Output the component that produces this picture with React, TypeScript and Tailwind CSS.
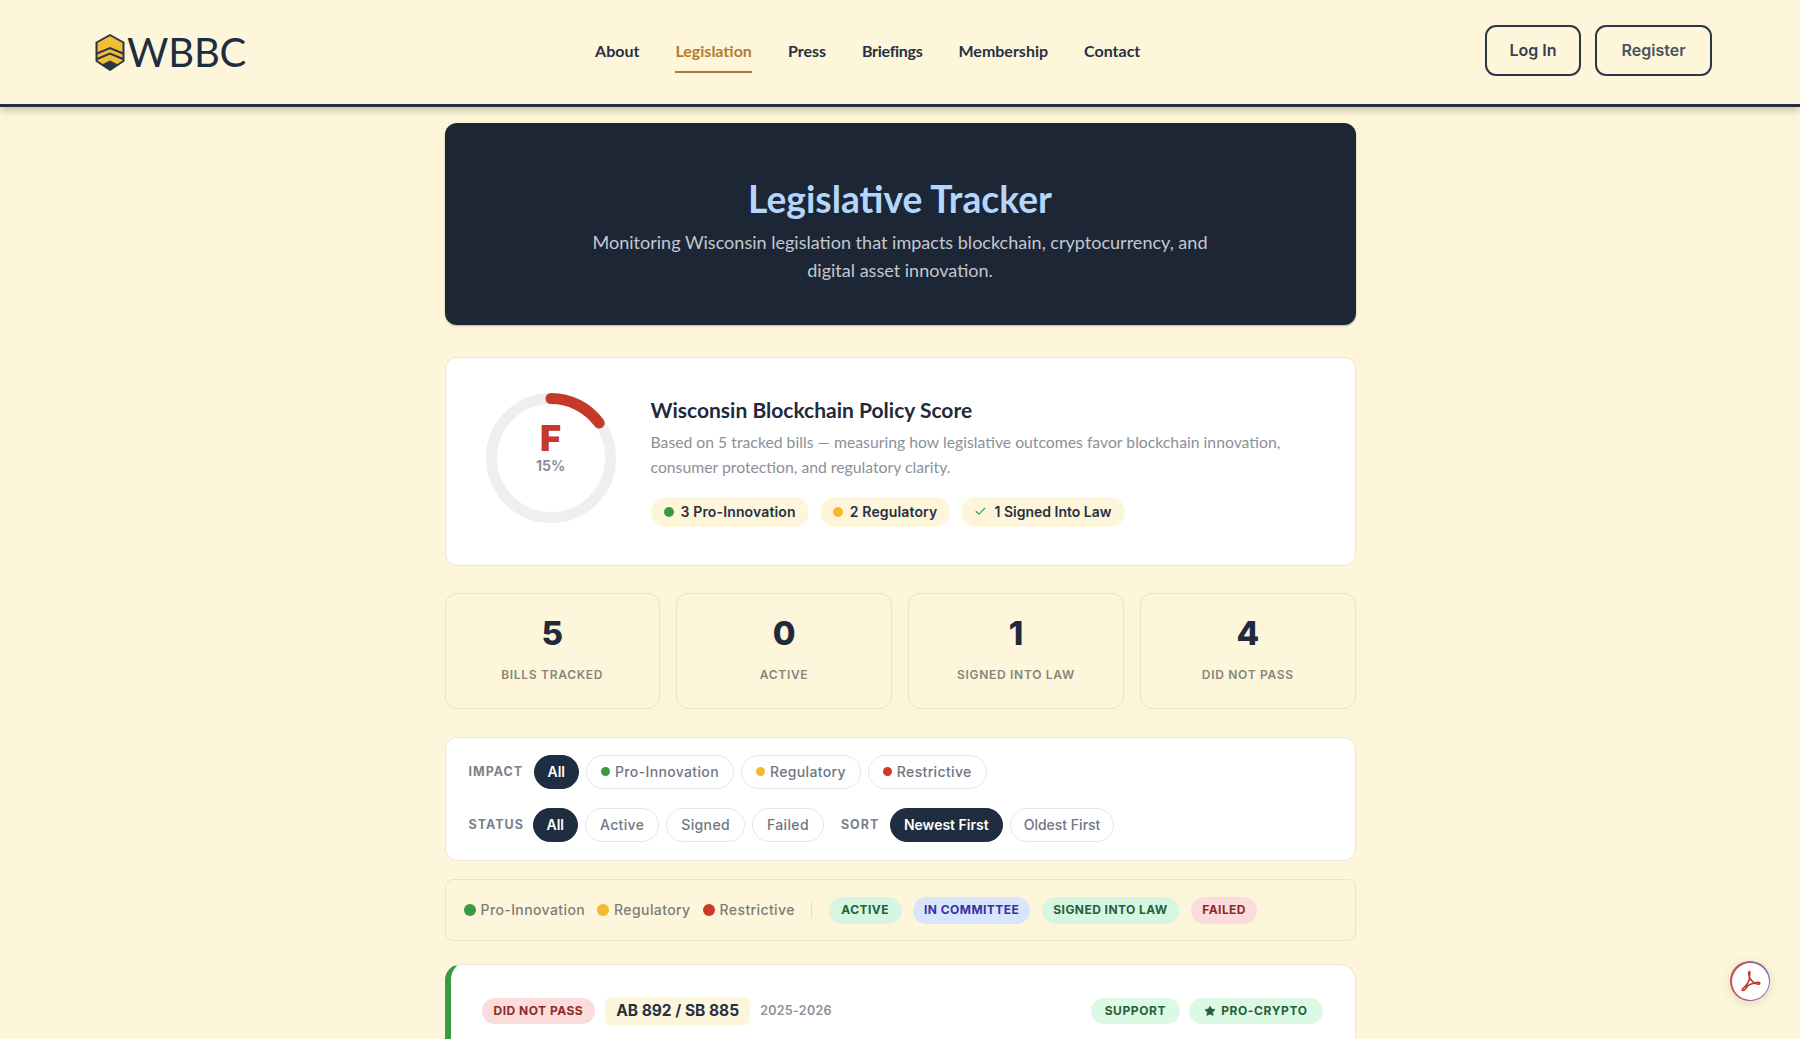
import { Check, Star } from 'lucide-react'

const NAV = ['About', 'Legislation', 'Press', 'Briefings', 'Membership', 'Contact']

const STATS = [
  { value: '5', label: 'Bills Tracked' },
  { value: '0', label: 'Active' },
  { value: '1', label: 'Signed Into Law' },
  { value: '4', label: 'Did Not Pass' },
]

const DOT = {
  green: 'bg-[#3a9a42]',
  yellow: 'bg-[#f4b92d]',
  red: 'bg-[#c93a2b]',
}

function Logo() {
  return (
    <div className="flex items-center gap-[1px]">
      <svg width="32" height="37" viewBox="0 0 32 37" className="shrink-0">
        <path d="M16 1 L29.5 8.5 V27 L16 36 L2.5 27 V8.5 Z" fill="#f2bd37" stroke="#2a3545" strokeWidth="2" strokeLinejoin="round" />
        <path d="M3 19.5 L16 14 L29 19.5" fill="none" stroke="#2a3545" strokeWidth="2" />
        <path d="M3 25 L16 19.5 L29 25" fill="none" stroke="#2a3545" strokeWidth="2" />
        <path d="M8 30.5 L16 26.5 L24 30.5 L16 36 Z" fill="#2a3545" />
      </svg>
      <span className="font-['Lato'] text-[40px] leading-none tracking-[-0.2px] text-[#1f2d40]">WBBC</span>
    </div>
  )
}

function Pill({ tight, children }: { tight?: boolean; children: React.ReactNode }) {
  return (
    <span
      className={`flex h-[30px] items-center rounded-full bg-[#fef6da] px-[13px] font-['Inter'] text-[14px] font-semibold text-[#253044] ${
        tight ? 'gap-[7px]' : 'gap-[7px] tracking-[0.15px]'
      }`}
    >
      {children}
    </span>
  )
}

function FilterButton({
  active,
  plain,
  dot,
  children,
}: {
  active?: boolean
  plain?: boolean
  dot?: string
  children: React.ReactNode
}) {
  return (
    <span
      className={`flex h-[34px] items-center gap-[5px] rounded-full border font-['Inter'] text-[14px] font-medium ${
        plain ? 'px-[13px] tracking-normal' : 'px-[14px] tracking-[0.35px]'
      } ${active ? 'border-[#1f2d40] bg-[#1f2d40] font-semibold text-white' : 'border-[#e5e7eb] bg-white text-[#6f7682]'}`}
    >
      {dot && <i className={`h-[9px] w-[9px] rounded-full ${dot}`} />}
      {children}
    </span>
  )
}

function FilterLabel({ children }: { children: React.ReactNode }) {
  return (
    <span className="mt-[1px] block font-['Inter'] text-[12.5px] leading-none font-bold tracking-[1px] text-[#7b818c] uppercase">
      {children}
    </span>
  )
}

function LegendItem({ dot, children }: { dot: string; children: React.ReactNode }) {
  return (
    <span className="flex items-center gap-[5px] font-['Inter'] text-[14px] font-medium tracking-[0.4px] text-[#7c7c78]">
      <i className={`h-3 w-3 rounded-full ${dot}`} />
      <span className="mb-[2px]">{children}</span>
    </span>
  )
}

function Badge({ className, children }: { className: string; children: React.ReactNode }) {
  return (
    <span className={`flex items-center rounded-full font-['Inter'] text-[12px] font-bold uppercase ${className}`}>
      {children}
    </span>
  )
}

export default function App() {
  return (
    <div className="h-[1039px] overflow-hidden bg-[#fef6da]">
      <header className="flex h-[107px] items-center border-b-[3px] border-[#252f3d] pr-[88px] pl-[94px] shadow-[0_3px_8px_rgba(60,60,40,0.3)]">
        <Logo />
        <nav className="ml-[349px] flex items-center gap-[36px] pb-[2px] font-['Lato'] text-[16px] font-bold text-[#253044]">
          {NAV.map((item) => (
            <span key={item} className={item === 'Briefings' ? 'relative tracking-[-0.3px]' : 'relative'}>
              {item === 'Legislation' ? (
                <>
                  <span className="text-[#b67a2f]">{item}</span>
                  <i className="absolute top-[32px] right-0 left-0 h-[2px] bg-[#b67a2f]" />
                </>
              ) : (
                item
              )}
            </span>
          ))}
        </nav>
        <div className="mb-[3px] ml-auto flex gap-[14px] font-['Inter'] text-[16px] font-semibold">
          <button type="button" className="h-[51px] w-[96px] rounded-[11px] border-2 border-[#2d3644] pb-[2px] text-[#37404e]">
            Log In
          </button>
          <button type="button" className="h-[51px] w-[117px] rounded-[11px] border-2 border-[#2d3644] pb-[2px] text-[#4a515e]">
            Register
          </button>
        </div>
      </header>

      <main className="mx-auto w-[911px] pt-[16px]">
        <section className="flex h-[202px] flex-col items-center rounded-xl bg-[#1c2635] pt-[53px] text-center shadow-[0_1px_2px_rgba(60,60,40,0.35)]">
          <h1 className="font-['Lato'] text-[37.2px] leading-[46px] font-bold text-[#b5d6fc]">Legislative Tracker</h1>
          <p className="mt-[7px] w-[640px] font-['Lato'] text-[18.05px] leading-[27.5px] text-[#c3c8d0]">
            Monitoring Wisconsin legislation that impacts blockchain, cryptocurrency, and digital asset innovation.
          </p>
        </section>

        <section className="mt-[32px] flex h-[209px] items-center gap-[35px] rounded-xl border border-[#ebe7d6] bg-white pl-[40px]">
          <div className="relative mb-[7px] h-[130px] w-[130px] shrink-0">
            <svg width="130" height="130" viewBox="0 0 130 130">
              <circle cx="65" cy="65" r="59.5" fill="none" stroke="#eeeff1" strokeWidth="11" />
              <circle
                cx="65"
                cy="65"
                r="59.5"
                fill="none"
                stroke="#c4392a"
                strokeWidth="11"
                strokeLinecap="round"
                strokeDasharray="56 400"
                transform="rotate(-90 65 65)"
              />
            </svg>
            <div className="absolute inset-0 flex flex-col items-center justify-center pb-[23px] font-['Inter']">
              <span className="text-[36px] leading-[38px] font-black text-[#c4392a]">F</span>
              <span className="text-[14px] leading-[18px] font-bold text-[#8a8f99]">15%</span>
            </div>
          </div>
          <div>
            <h2 className="font-['Lato'] text-[21px] leading-[26px] font-bold text-[#1f2a3c]">Wisconsin Blockchain Policy Score</h2>
            <p className="mt-[6px] w-[660px] font-['Lato'] text-[15.75px] leading-[25px] text-[#8b909a]">
              Based on 5 tracked bills — measuring how legislative outcomes favor blockchain innovation, consumer protection, and regulatory clarity.
            </p>
            <div className="mt-[18px] flex gap-[11px]">
              <Pill>
                <i className={`h-[10px] w-[10px] rounded-full ${DOT.green}`} />3 Pro-Innovation
              </Pill>
              <Pill>
                <i className={`h-[10px] w-[10px] rounded-full ${DOT.yellow}`} />2 Regulatory
              </Pill>
              <Pill tight>
                <Check className="h-[13px] w-[13px] text-[#3a9a42]" strokeWidth={2} />1 Signed Into Law
              </Pill>
            </div>
          </div>
        </section>

        <section className="mt-[27px] grid grid-cols-4 gap-[16.5px]">
          {STATS.map((s) => (
            <div key={s.label} className="flex h-[116px] flex-col items-center rounded-xl border border-[#e9e3cb] pt-[19px]">
              <span className="font-['Inter'] text-[33px] leading-[40px] font-extrabold text-[#1f2a3c]">{s.value}</span>
              <span className="mt-[14px] font-['Inter'] text-[12px] leading-[16px] font-semibold tracking-[0.7px] text-[#85857f] uppercase">
                {s.label}
              </span>
            </div>
          ))}
        </section>

        <section className="mt-[28px] flex h-[124px] flex-col justify-center gap-[19px] rounded-xl border border-[#ebe7d6] bg-white px-[23px] pb-[2px]">
          <div className="flex items-center gap-[7px]">
            <div className="w-[58px]">
              <FilterLabel>Impact</FilterLabel>
            </div>
            <FilterButton active plain>
              All
            </FilterButton>
            <FilterButton dot={DOT.green}>Pro-Innovation</FilterButton>
            <FilterButton dot={DOT.yellow}>Regulatory</FilterButton>
            <FilterButton dot={DOT.red}>Restrictive</FilterButton>
          </div>
          <div className="flex items-center gap-[7px]">
            <div className="w-[57px]">
              <FilterLabel>Status</FilterLabel>
            </div>
            <FilterButton active plain>
              All
            </FilterButton>
            <FilterButton>Active</FilterButton>
            <FilterButton>Signed</FilterButton>
            <FilterButton>Failed</FilterButton>
            <div className="ml-[10px] w-[42px]">
              <FilterLabel>Sort</FilterLabel>
            </div>
            <FilterButton active plain>
              Newest First
            </FilterButton>
            <FilterButton plain>Oldest First</FilterButton>
          </div>
        </section>

        <section className="mt-[18px] flex h-[62px] items-center rounded-lg border border-[#ebe3c6] pl-[18px]">
          <div className="flex gap-[12px]">
            <LegendItem dot={DOT.green}>Pro-Innovation</LegendItem>
            <LegendItem dot={DOT.yellow}>Regulatory</LegendItem>
            <LegendItem dot={DOT.red}>Restrictive</LegendItem>
          </div>
          <i className="mr-[17px] ml-[16px] h-[16px] w-px bg-[#e4dfc9]" />
          <div className="flex gap-[11.5px] tracking-[0.45px]">
            <Badge className="h-[27px] bg-[#d6f6e2] px-[12.5px] text-[#25603a]">Active</Badge>
            <Badge className="h-[27px] bg-[#d9e4fd] px-[11px] text-[#3730a3]">In Committee</Badge>
            <Badge className="h-[27px] bg-[#d6f6e2] px-[11.5px] text-[#25603a]">Signed Into Law</Badge>
            <Badge className="h-[27px] bg-[#fadcdc] px-[11.5px] text-[#8f2a2a]">Failed</Badge>
          </div>
        </section>

        <section className="mt-[23px] h-[200px] rounded-t-2xl border-t border-r border-[#ebe7d6] border-l-[6px] border-l-[#3a9a42] bg-white pt-[32px] pr-[32px] pl-[31px]">
          <div className="flex items-center">
            <Badge className="h-[26px] bg-[#fadcdc] px-[12px] tracking-[0.5px] text-[#8f2a2a]">Did Not Pass</Badge>
            <span className="ml-[10px] flex h-[28px] items-center rounded-md bg-[#fef6da] px-[11px] font-['Inter'] text-[15.5px] font-bold text-[#253044]">
              AB 892 / SB 885
            </span>
            <span className="ml-[10px] font-['Inter'] text-[12.5px] font-semibold tracking-[0.3px] text-[#8b909a]">2025-2026</span>
            <div className="ml-auto flex gap-[9px] tracking-[0.6px]">
              <Badge className="h-[26px] bg-[#dcf9e4] px-[14px] text-[#25603a]">Support</Badge>
              <Badge className="h-[26px] gap-[5px] bg-[#dcf9e4] px-[15px] text-[#25603a]">
                <Star className="h-[12px] w-[12px] fill-[#25603a]" strokeWidth={1} />
                Pro-Crypto
              </Badge>
            </div>
          </div>
        </section>
      </main>

      <div className="fixed top-[961px] left-[1730px] h-[40px] w-[40px] rounded-full bg-gradient-to-r from-[#c0504d] to-[#6f63c9] p-[1.5px] shadow-[0_2px_10px_rgba(120,100,60,0.2)]">
        <button type="button" className="flex h-full w-full items-center justify-center rounded-full bg-white">
          <svg width="26" height="26" viewBox="0 0 26 26" fill="none" stroke="#c0392b" strokeWidth="1.6" strokeLinejoin="round">
            <path d="M12.6 3.5 c-1.2 0 -1.2 3 0.2 6.5 c-1 3.4 -3.4 7.6 -5.6 9.4 c-1.8 1.5 -2.4 2.8 -1.6 3.1 c1 0.3 3 -1 5 -4.6 c2.2 -1.6 5 -2.6 7 -2.8 c2.6 1.4 5.2 1.4 5.2 0.2 c0 -1 -2.4 -1.4 -5.2 -0.2 c-2.4 -1.6 -4.4 -4 -5.4 -5.6 c0.8 -3 0.6 -6 0.4 -6 z" />
          </svg>
        </button>
      </div>
    </div>
  )
}
